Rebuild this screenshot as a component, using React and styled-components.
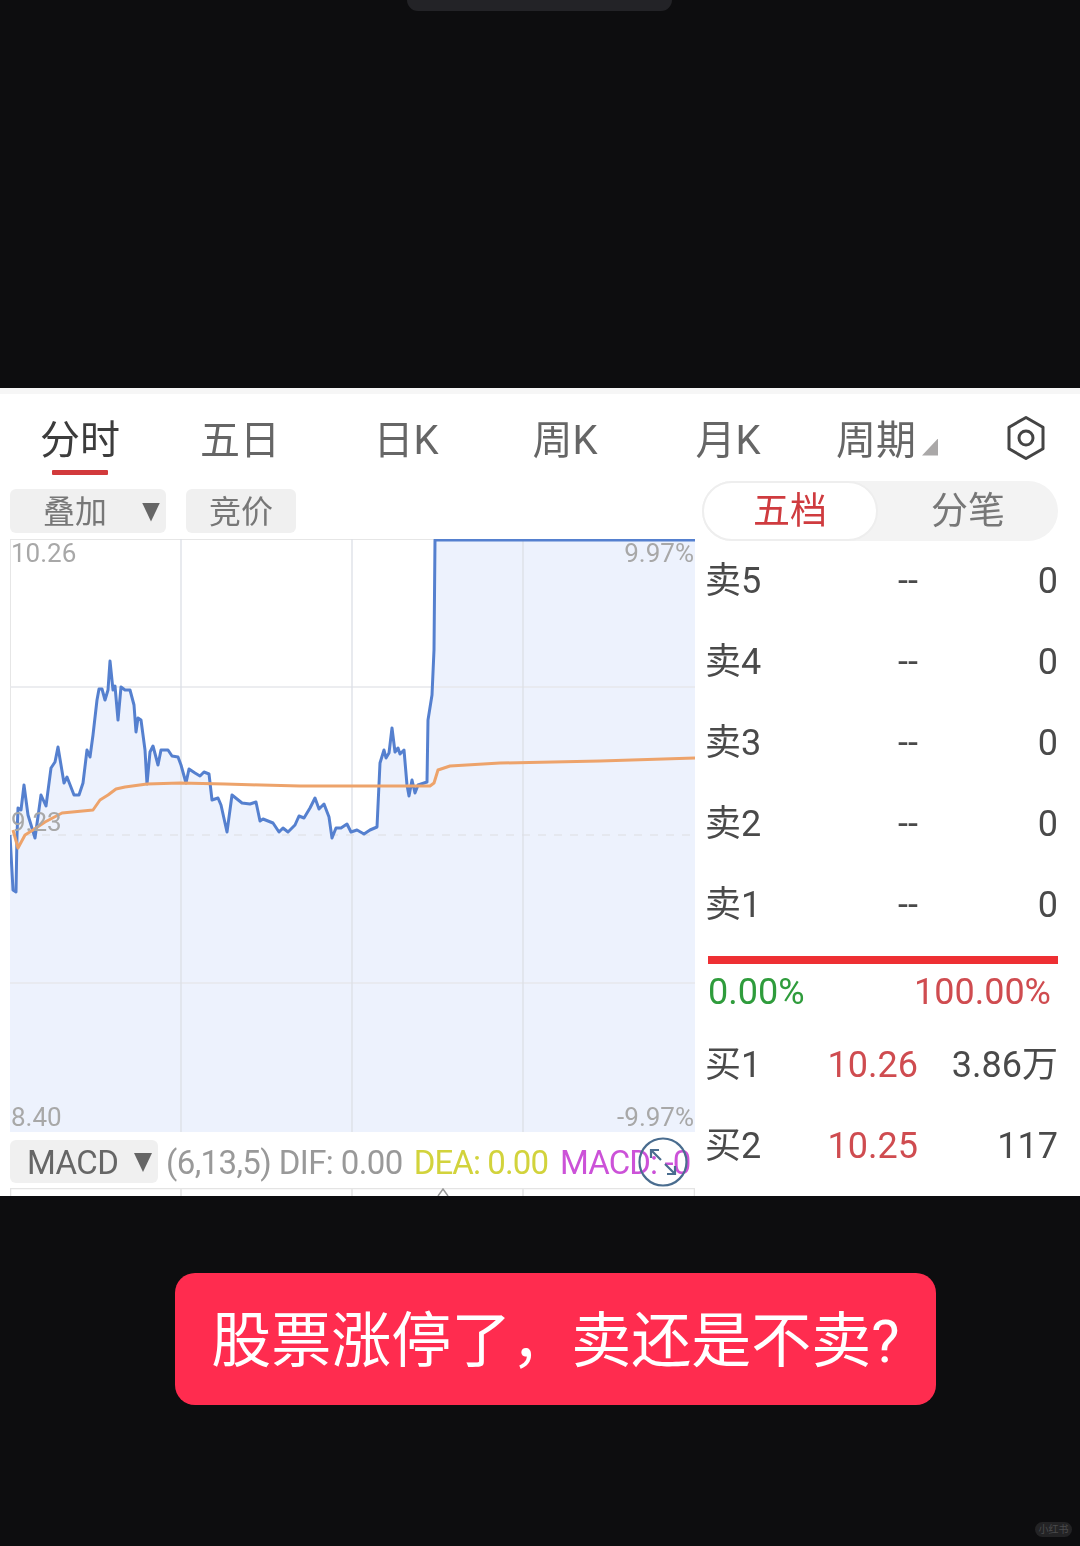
import styled, { createGlobalStyle } from 'styled-components';

const GlobalStyle = createGlobalStyle`
  html, body {
    margin: 0;
    padding: 0;
    background: #0d0d0f;
  }
  * {
    box-sizing: border-box;
  }
`;

const Page = styled.div`
  position: relative;
  width: 1080px;
  height: 1546px;
  overflow: hidden;
  background: #0d0d0f;
  font-family: Roboto, 'Noto Sans CJK SC', sans-serif;
  line-height: 1.2;
`;

const Notch = styled.div`
  width: 265px;
  height: 11px;
  margin: 0 0 377px 407px;
  background: #232327;
  border-radius: 0 0 30px 30px;
`;

const Panel = styled.section`
  height: 808px;
  overflow: hidden;
  background: #fff;
  border-top: 6px solid #f6f6f6;
  filter: blur(0.6px);
`;

const Tabs = styled.div`
  display: grid;
  grid-template-columns: 160px 160px 172px 146px 180px 140px 1fr;
  justify-items: center;
  align-items: start;
  height: 87px;
  padding-top: 18px;
`;

const Tab = styled.div`
  display: flex;
  flex-direction: column;
  align-items: center;
`;

const TabLabel = styled.div`
  display: flex;
  align-items: center;
  height: 54px;
  padding-top: 3px;
  font-size: 40px;
  font-weight: 400;
  color: ${(props) => (props.$active ? '#3c3c3c' : '#666')};
  white-space: nowrap;
`;

const Underline = styled.div`
  width: 56px;
  height: 5px;
  margin-top: 4px;
  background: #d23a3c;
  border-radius: 1px;
`;

const CornerMark = styled.span`
  width: 16px;
  height: 17px;
  margin: 13px 2px 0 6px;
  background: #aaa8a8;
  clip-path: polygon(100% 0, 100% 100%, 0 100%);
`;

const GearIcon = styled.svg`
  display: block;
  width: 42px;
  height: 46px;
  margin: 3px 0 0 14px;
`;

const Body = styled.div`
  display: grid;
  grid-template-columns: 700px 380px;
`;

const LeftColumn = styled.div`
  padding: 8px 5px 0 10px;
`;

const ChipRow = styled.div`
  display: flex;
  gap: 20px;
  height: 44px;
  margin-bottom: 6px;
`;

const Chip = styled.div`
  display: flex;
  align-items: center;
  justify-content: ${(props) => (props.$between ? 'space-between' : 'center')};
  width: ${(props) => props.$width}px;
  padding: ${(props) => (props.$between ? '2px 6px 0 33px' : '2px 0 0')};
  background: #f0f0f0;
  border-radius: 6px;
  font-size: 32px;
  color: #777;
`;

const Caret = styled.span`
  width: 18px;
  height: 19px;
  background: #666;
  clip-path: polygon(0 0, 100% 0, 50% 100%);
`;

const ChartBox = styled.div`
  position: relative;
  width: 685px;
  height: 593px;
`;

const ChartSvg = styled.svg`
  display: block;
  width: 100%;
  height: 100%;
`;

const AxisLabel = styled.span`
  position: absolute;
  top: ${(props) => props.$top}px;
  left: ${(props) => (props.$right ? 'auto' : '1px')};
  right: ${(props) => (props.$right ? '1px' : 'auto')};
  font-size: 26px;
  line-height: 28px;
  color: #a8a8a8;
`;

const MacdRow = styled.div`
  position: relative;
  display: flex;
  align-items: center;
  height: 43px;
  margin-top: 8px;
  font-size: 33px;
  white-space: nowrap;
  letter-spacing: -0.6px;
`;

const MacdChip = styled.div`
  display: flex;
  flex: none;
  align-items: center;
  justify-content: space-between;
  width: 148px;
  height: 43px;
  margin-right: 8px;
  padding: 2px 6px 0 17px;
  background: #f0f0f0;
  border-radius: 6px;
  color: #666;
`;

const MacdValue = styled.span`
  margin: 2px ${(props) => props.$gap || 0}px 0 0;
  color: ${(props) => props.$color};
  letter-spacing: ${(props) => props.$tight ? '-0.9px' : 'inherit'};
`;

const ExpandButton = styled.svg`
  position: absolute;
  left: 627px;
  top: -4px;
  width: 52px;
  height: 52px;
`;

const LowerChart = styled.svg`
  display: block;
  width: 685px;
  height: 40px;
  margin-top: 5px;
`;

const RightColumn = styled.div`
  padding: 0 22px 0 2px;
`;

const Segment = styled.div`
  display: grid;
  grid-template-columns: 176px 1fr;
  height: 60px;
  background: #f3f3f3;
  border-radius: 30px;
`;

const SegmentItem = styled.div`
  display: flex;
  align-items: center;
  justify-content: center;
  padding-top: 3px;
  font-size: 37px;
  color: ${(props) => (props.$active ? '#cf3b3f' : '#777')};
  background: ${(props) => (props.$active ? '#fff' : 'transparent')};
  border: ${(props) => (props.$active ? '2px solid #eeeeee' : 'none')};
  border-radius: 30px;
`;

const QuoteList = styled.div`
  margin: ${(props) => props.$top}px 0 0 3px;
`;

const QuoteRow = styled.div`
  display: grid;
  grid-template-columns: 100px 113px 140px;
  align-items: center;
  height: 81px;
  padding-top: 2px;
  font-size: 36px;
  color: #4a4a4a;
`;

const Cell = styled.div`
  text-align: ${(props) => (props.$right ? 'right' : 'left')};
  color: ${(props) => props.$color || 'inherit'};
  white-space: nowrap;
`;

const RatioBar = styled.div`
  height: 8px;
  margin: 11px 0 0 6px;
  background: #ee2f33;
`;

const RatioRow = styled.div`
  display: flex;
  justify-content: space-between;
  height: 44px;
  margin: 6px 7px 0 6px;
  font-size: 36px;
  line-height: 44px;
`;

const RatioValue = styled.span`
  color: ${(props) => props.$color};
`;

const Caption = styled.div`
  display: flex;
  align-items: center;
  justify-content: center;
  width: 761px;
  height: 132px;
  margin: 77px 0 0 175px;
  padding-top: 5px;
  background: #ff2c4f;
  border-radius: 20px;
  font-size: 60px;
  font-weight: 400;
  color: #fff;
  white-space: nowrap;
`;

const Watermark = styled.div`
  position: absolute;
  left: 1035px;
  top: 1522px;
  width: 37px;
  height: 15px;
  background: #232325;
  border-radius: 8px;
  font-size: 10px;
  line-height: 15px;
  text-align: center;
  color: #4a4a4c;
`;

const PRICE_LINE = '10,835 13,890 16,892 17,835 18,808 21,810 24,785 28,815 35,838 41,795 46,806 51,768 55,762 58,747 64,783 67,777 74,795 79,795 83,783 87,750 90,757 93,735 97,700 99,689 102,689 105,700 108,690 110,661 113,690 115,686 118,720 121,687 125,690 130,690 134,705 136,732 138,718 141,720 145,750 147,784 150,752 153,746 158,765 161,750 168,750 172,756 178,757 181,765 186,783 189,769 195,773 200,776 204,772 209,774 212,800 218,798 221,805 227,832 232,795 237,799 242,803 250,804 256,802 260,821 263,819 273,823 279,832 283,828 288,832 295,825 299,816 304,818 310,808 315,798 319,809 324,804 329,817 332,838 336,828 341,828 347,824 351,832 357,830 364,834 370,830 377,827 380,763 384,750 386,758 389,753 392,728 395,752 398,748 400,754 404,750 407,785 409,796 412,780 415,793 418,785 427,782 428,720 432,695 434,650 435,540 695,540';
const AVERAGE_LINE = '13,830 18,848 25,835 33,830 45,822 62,813 93,810 100,800 108,795 116,789 125,787 147,784 180,783 225,784 300,786 430,786 434,783 438,770 450,766 500,763 600,761 695,758';

const TABS = [
  { label: '分时', active: true },
  { label: '五日' },
  { label: '日K' },
  { label: '周K' },
  { label: '月K' },
];

const SELLS = ['卖5', '卖4', '卖3', '卖2', '卖1'];
const BUYS = [
  { label: '买1', price: '10.26', volume: '3.86万' },
  { label: '买2', price: '10.25', volume: '117' },
];

const Chart = () => (
  <ChartBox>
    <ChartSvg viewBox="10 539 685 593">
      <rect x="10.5" y="539.5" width="684" height="592" fill="#fff" stroke="#e6e6e6" />
      <polygon points={`${PRICE_LINE} 695,1132 10,1132`} fill="#edf2fd" />
      <path d="M10 687H695M10 983H695" stroke="#e6e8ec" strokeWidth="1.5" />
      <path d="M10 835H695" stroke="#e2e5ea" strokeWidth="1.5" strokeDasharray="8 8" />
      <path d="M181 539V1132M352 539V1132M523 539V1132" stroke="#dcdfe6" strokeWidth="1.3" />
      <polyline points={PRICE_LINE} fill="none" stroke="#5580cf" strokeWidth="3" strokeLinejoin="round" />
      <polyline points={AVERAGE_LINE} fill="none" stroke="#eda36b" strokeWidth="3" strokeLinejoin="round" />
    </ChartSvg>
    <AxisLabel $top={0}>10.26</AxisLabel>
    <AxisLabel $top={0} $right>9.97%</AxisLabel>
    <AxisLabel $top={269}>9.23</AxisLabel>
    <AxisLabel $top={564}>8.40</AxisLabel>
    <AxisLabel $top={564} $right>-9.97%</AxisLabel>
  </ChartBox>
);

const App = () => (
  <Page>
    <GlobalStyle />
    <Notch />
    <Panel>
      <Tabs>
        {TABS.map((tab) => (
          <Tab key={tab.label}>
            <TabLabel $active={tab.active}>{tab.label}</TabLabel>
            {tab.active && <Underline />}
          </Tab>
        ))}
        <Tab>
          <TabLabel>
            周期
            <CornerMark />
          </TabLabel>
        </Tab>
        <Tab>
          <GearIcon viewBox="0 0 42 46" fill="none" stroke="#444" strokeWidth="3">
            <path d="M21 2.5 38 12.2V33.8L21 43.5 4 33.8V12.2Z" strokeLinejoin="round" />
            <circle cx="21" cy="23" r="7" />
          </GearIcon>
        </Tab>
      </Tabs>
      <Body>
        <LeftColumn>
          <ChipRow>
            <Chip $width={156} $between>
              叠加
              <Caret />
            </Chip>
            <Chip $width={110}>竞价</Chip>
          </ChipRow>
          <Chart />
          <MacdRow>
            <MacdChip>
              MACD
              <Caret />
            </MacdChip>
            <MacdValue $color="#999" $gap={11}>(6,13,5) DIF: 0.00</MacdValue>
            <MacdValue $color="#d2d33c" $gap={12} $tight>DEA: 0.00</MacdValue>
            <MacdValue $color="#cc52d8" $tight>MACD: -0</MacdValue>
            <ExpandButton viewBox="0 0 52 52" fill="none" stroke="#4a6d8f" strokeWidth="2.2">
              <circle cx="26" cy="26" r="23.5" />
              <path d="M14 22V14H22M14 14 24 24M38 30V38H30M38 38 28 28" />
            </ExpandButton>
          </MacdRow>
          <LowerChart viewBox="10 1189 685 40">
            <path d="M10 1189.5H695M10.5 1189V1229M181 1189V1229M352 1189V1229M523 1189V1229M694.5 1189V1229" stroke="#e4e4e4" strokeWidth="1.5" />
            <path d="M438 1197 443 1190 448 1197" fill="none" stroke="#999" strokeWidth="1.5" />
          </LowerChart>
        </LeftColumn>
        <RightColumn>
          <Segment>
            <SegmentItem $active>五档</SegmentItem>
            <SegmentItem>分笔</SegmentItem>
          </Segment>
          <QuoteList $top={-1}>
            {SELLS.map((label) => (
              <QuoteRow key={label}>
                <Cell>{label}</Cell>
                <Cell $right>--</Cell>
                <Cell $right>0</Cell>
              </QuoteRow>
            ))}
          </QuoteList>
          <RatioBar />
          <RatioRow>
            <RatioValue $color="#2f9c3c">0.00%</RatioValue>
            <RatioValue $color="#cf4c50">100.00%</RatioValue>
          </RatioRow>
          <QuoteList $top={10}>
            {BUYS.map((row) => (
              <QuoteRow key={row.label}>
                <Cell>{row.label}</Cell>
                <Cell $right $color="#cf4c50">{row.price}</Cell>
                <Cell $right>{row.volume}</Cell>
              </QuoteRow>
            ))}
          </QuoteList>
        </RightColumn>
      </Body>
    </Panel>
    <Caption>股票涨停了，卖还是不卖?</Caption>
    <Watermark>小红书</Watermark>
  </Page>
);

export default App;
